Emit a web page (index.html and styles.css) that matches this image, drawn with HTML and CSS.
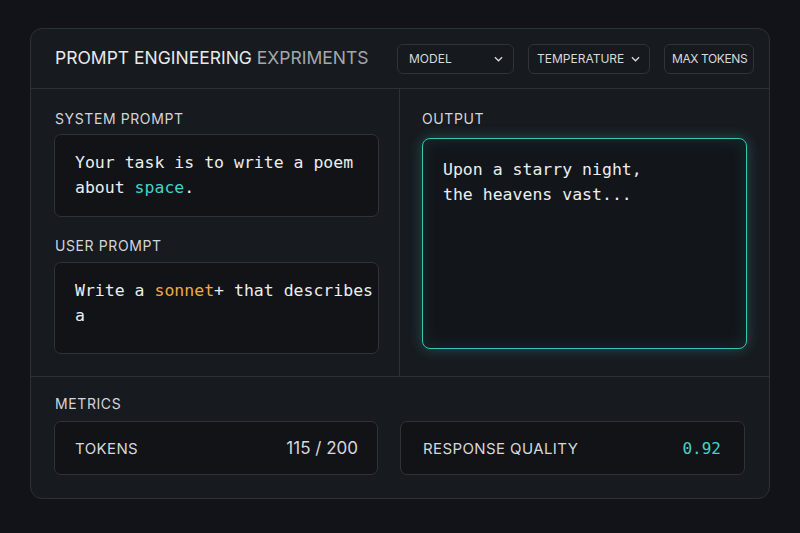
FILE: index.html
```html
<!DOCTYPE html>
<html>
<head>
<meta charset="utf-8">
<link rel="stylesheet" href="styles.css">
</head>
<body>
<div class="card">
  <header class="head">
    <h1 class="title">PROMPT ENGINEERING <span class="dim">EXPRIMENTS</span></h1>
    <div class="controls">
      <button class="ctl ctl-model">MODEL <svg class="chev" viewBox="0 0 10 6"><path d="M1 1l4 4 4-4"/></svg></button>
      <button class="ctl ctl-temp">TEMPERATURE <svg class="chev" viewBox="0 0 10 6"><path d="M1 1l4 4 4-4"/></svg></button>
      <button class="ctl ctl-max">MAX TOKENS</button>
    </div>
  </header>
  <section class="main">
    <div class="col left">
      <div class="label">SYSTEM PROMPT</div>
      <div class="box sys">Your task is to write a poem<br>about <span class="teal">space</span>.</div>
      <div class="label label2">USER PROMPT</div>
      <div class="box user">Write a <span class="orange">sonnet</span>+ that describes<br>a</div>
    </div>
    <div class="col right">
      <div class="label">OUTPUT</div>
      <div class="box output">Upon a starry night,<br>the heavens vast...</div>
    </div>
  </section>
  <section class="metrics">
    <div class="label">METRICS</div>
    <div class="mrow">
      <div class="metric m1"><span class="mname">TOKENS</span><span class="mval">115 / 200</span></div>
      <div class="metric m2"><span class="mname">RESPONSE QUALITY</span><span class="mval teal mono">0.92</span></div>
    </div>
  </section>
</div>
</body>
</html>
```
FILE: styles.css
```css
* { box-sizing: border-box; }
body {
  margin: 0;
  background: #111318;
  font-family: Inter, "Noto Sans", sans-serif;
  color: #d9dbde;
  width: 800px;
  height: 533px;
  overflow: hidden;
}
.card {
  margin: 28px 0 0 30px;
  width: 740px;
  height: 471px;
  border: 1px solid #2d3137;
  border-radius: 12px;
  background: #171a1f;
  display: flex;
  flex-direction: column;
  overflow: hidden;
}
.head {
  height: 60px;
  flex: none;
  border-bottom: 1px solid #2d3137;
  display: flex;
  align-items: center;
  justify-content: space-between;
  padding: 0 15px 0 24px;
}
.title {
  margin: 0 0 2px 0;
  font-size: 17.5px;
  font-weight: 400;
  color: #e8e9eb;
  letter-spacing: 0;
}
.dim { color: #a4a8ae; }
.controls { display: flex; gap: 14px; }
.ctl {
  height: 30px;
  background: #16191e;
  border: 1px solid #30343a;
  border-radius: 6px;
  color: #d8dadd;
  font-family: Inter, sans-serif;
  font-size: 12px;
  white-space: nowrap;
  display: flex;
  align-items: center;
  justify-content: space-between;
  padding: 0 10px 0 11px;
}
.ctl-model { width: 117px; }
.ctl-temp { width: 122px; padding: 0 9px 0 8px; }
.ctl-max { width: 90px; padding: 0 6px 0 7px; letter-spacing: -0.4px; }
.chev { width: 9px; height: 6px; fill: none; stroke: #d8dadd; stroke-width: 1.4; }
.main {
  height: 288px;
  flex: none;
  display: grid;
  grid-template-columns: 369px 1fr;
  border-bottom: 1px solid #2d3137;
}
.col { display: flex; flex-direction: column; }
.left { padding: 21px 20px 0 24px; border-right: 1px solid #2d3137; }
.right { padding: 21px 22px 0 22px; }
.label {
  font-size: 14px;
  letter-spacing: 0.6px;
  color: #d3d5d8;
  line-height: 17px;
  height: 17px;
}
.box {
  background: #111317;
  border: 1px solid #2f3339;
  border-radius: 7px;
  font-family: "DejaVu Sans Mono", monospace;
  font-size: 16.5px;
  line-height: 25px;
  color: #eceef0;
  padding: 15px 4px 14px 20px;
  white-space: nowrap;
}
.sys { margin-top: 7px; height: 83px; margin-left: -1px; }
.label2 { margin-top: 20px; }
.user { margin-top: 8px; height: 92px; margin-left: -1px; }
.output {
  margin-top: 11px;
  height: 211px;
  border: 1.5px solid #3cc4bb;
  border-radius: 8px;
  background: #12161b;
  box-shadow: 0 0 14px rgba(56, 200, 190, 0.32), inset 0 0 16px rgba(56, 200, 190, 0.12);
  padding: 18px 20px;
}
.teal { color: #43d3c9; }
.orange { color: #f0a84c; }
.metrics { padding: 18px 23px 0 24px; }
.mrow { display: flex; gap: 22px; margin-top: 9px; margin-left: -1px; }
.metric {
  height: 54px;
  background: #111317;
  border: 1px solid #2f3339;
  border-radius: 7px;
  display: flex;
  align-items: center;
  justify-content: space-between;
  padding: 0 19px 0 20px;
  font-size: 15px;
  letter-spacing: 0.4px;
  color: #d6d8db;
}
.m1 { width: 324px; }
.m2 { width: 345px; padding: 0 23px 0 22px; }
.mval { font-size: 17px; letter-spacing: 0; }
.mono { font-family: "DejaVu Sans Mono", monospace; font-size: 16px; letter-spacing: 0; }
```
